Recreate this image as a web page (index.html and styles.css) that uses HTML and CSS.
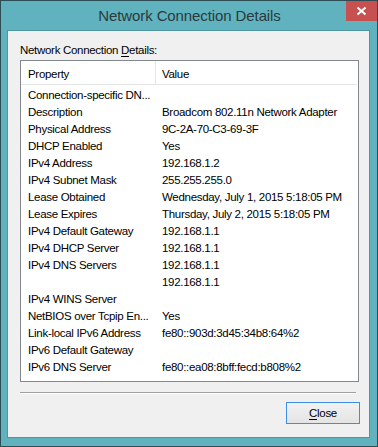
FILE: index.html
```html
<!DOCTYPE html>
<html>
<head>
<meta charset="utf-8">
<link rel="stylesheet" href="styles.css">
</head>
<body>
<div class="window">
  <div class="titlebar">
    <div class="title">Network Connection Details</div>
    <div class="close-x">
      <svg width="31" height="20" viewBox="0 0 31 20"><path d="M11.5 6.5 L19.5 13.5 M19.5 6.5 L11.5 13.5" stroke="#fff" stroke-width="2"/></svg>
    </div>
  </div>
  <div class="client">
    <div class="label">Network Connection <u>D</u>etails:</div>
    <div class="listbox">
      <div class="header">
        <div class="hcell c1">Property</div>
        <div class="hcell c2">Value</div>
      </div>
      <div class="rows">
        <div class="row"><span class="c1">Connection-specific DN...</span><span class="c2"></span></div>
        <div class="row"><span class="c1">Description</span><span class="c2">Broadcom 802.11n Network Adapter</span></div>
        <div class="row"><span class="c1">Physical Address</span><span class="c2">9C-2A-70-C3-69-3F</span></div>
        <div class="row"><span class="c1">DHCP Enabled</span><span class="c2">Yes</span></div>
        <div class="row"><span class="c1">IPv4 Address</span><span class="c2">192.168.1.2</span></div>
        <div class="row"><span class="c1">IPv4 Subnet Mask</span><span class="c2">255.255.255.0</span></div>
        <div class="row"><span class="c1">Lease Obtained</span><span class="c2">Wednesday, July 1, 2015 5:18:05 PM</span></div>
        <div class="row"><span class="c1">Lease Expires</span><span class="c2">Thursday, July 2, 2015 5:18:05 PM</span></div>
        <div class="row"><span class="c1">IPv4 Default Gateway</span><span class="c2">192.168.1.1</span></div>
        <div class="row"><span class="c1">IPv4 DHCP Server</span><span class="c2">192.168.1.1</span></div>
        <div class="row"><span class="c1">IPv4 DNS Servers</span><span class="c2">192.168.1.1</span></div>
        <div class="row"><span class="c1"></span><span class="c2">192.168.1.1</span></div>
        <div class="row"><span class="c1">IPv4 WINS Server</span><span class="c2"></span></div>
        <div class="row"><span class="c1">NetBIOS over Tcpip En...</span><span class="c2">Yes</span></div>
        <div class="row"><span class="c1">Link-local IPv6 Address</span><span class="c2">fe80::903d:3d45:34b8:64%2</span></div>
        <div class="row"><span class="c1">IPv6 Default Gateway</span><span class="c2"></span></div>
        <div class="row"><span class="c1">IPv6 DNS Server</span><span class="c2">fe80::ea08:8bff:fecd:b808%2</span></div>
      </div>
    </div>
    <div class="separator"></div>
    <div class="buttons">
      <div class="button"><u>C</u>lose</div>
    </div>
  </div>
</div>
</body>
</html>
```
FILE: styles.css
```css
html, body {
  margin: 0;
  padding: 0;
  background: #ffffff;
}
body {
  font-family: "Liberation Sans", Arial, sans-serif;
  font-size: 11.5px;
  letter-spacing: -0.3px;
  color: #000;
}
.window {
  box-sizing: border-box;
  width: 378px;
  height: 447px;
  border: 1px solid #2c4d53;
  background: #5fb2be;
  padding: 0 7px 8px 6px;
  display: flex;
  flex-direction: column;
}
.titlebar {
  height: 29px;
  display: flex;
  align-items: flex-start;
  position: relative;
}
.title {
  flex: 1;
  text-align: center;
  font-size: 15px;
  letter-spacing: -0.1px;
  color: #2b3a3c;
  padding-top: 6px;
  padding-left: 2px;
}
.close-x {
  position: absolute;
  right: -7px;
  top: 0;
  width: 31px;
  height: 20px;
  background: #c75050;
}
.close-x svg {
  display: block;
}
.client {
  flex: 1;
  border: 1px solid #4d98a3;
  background: #f0f0f0;
  padding: 0 0 0 12px;
  display: flex;
  flex-direction: column;
}
.label {
  height: 29px;
  line-height: 15px;
  padding-top: 12px;
  box-sizing: border-box;
}
.label u, .button u {
  text-decoration-thickness: 1px;
  text-underline-offset: 2px;
}
.listbox {
  box-sizing: border-box;
  width: 339px;
  height: 322px;
  border: 1px solid #828790;
  background: #fff;
  display: flex;
  flex-direction: column;
}
.header {
  display: flex;
  height: 23px;
  border-bottom: 1px solid #e5e5e5;
  margin-right: 1px;
}
.hcell {
  line-height: 19px;
  padding-top: 4px;
}
.c1 {
  box-sizing: border-box;
  width: 134px;
  padding-left: 7px;
  flex: none;
}
.hcell.c1 {
  border-right: 1px solid #e5e5e5;
  width: 135px;
}
.c2 {
  padding-left: 6px;
  white-space: nowrap;
}
.rows {
  padding-top: 2px;
}
.row {
  display: flex;
  height: 17px;
  line-height: 17px;
  white-space: nowrap;
}
.row .c2 {
  padding-left: 7px;
}
.separator {
  width: 336px;
  height: 1px;
  background: #a0a0a0;
  border-bottom: 1px solid #ffffff;
  margin-top: 10px;
}
.buttons {
  display: flex;
  justify-content: flex-end;
  width: 340px;
  padding-top: 8px;
}
.button {
  box-sizing: border-box;
  width: 74px;
  height: 22px;
  border: 1px solid #3c8ee8;
  background: linear-gradient(#f2f2f2, #e4e4e4);
  text-align: center;
  line-height: 20px;
}
```
